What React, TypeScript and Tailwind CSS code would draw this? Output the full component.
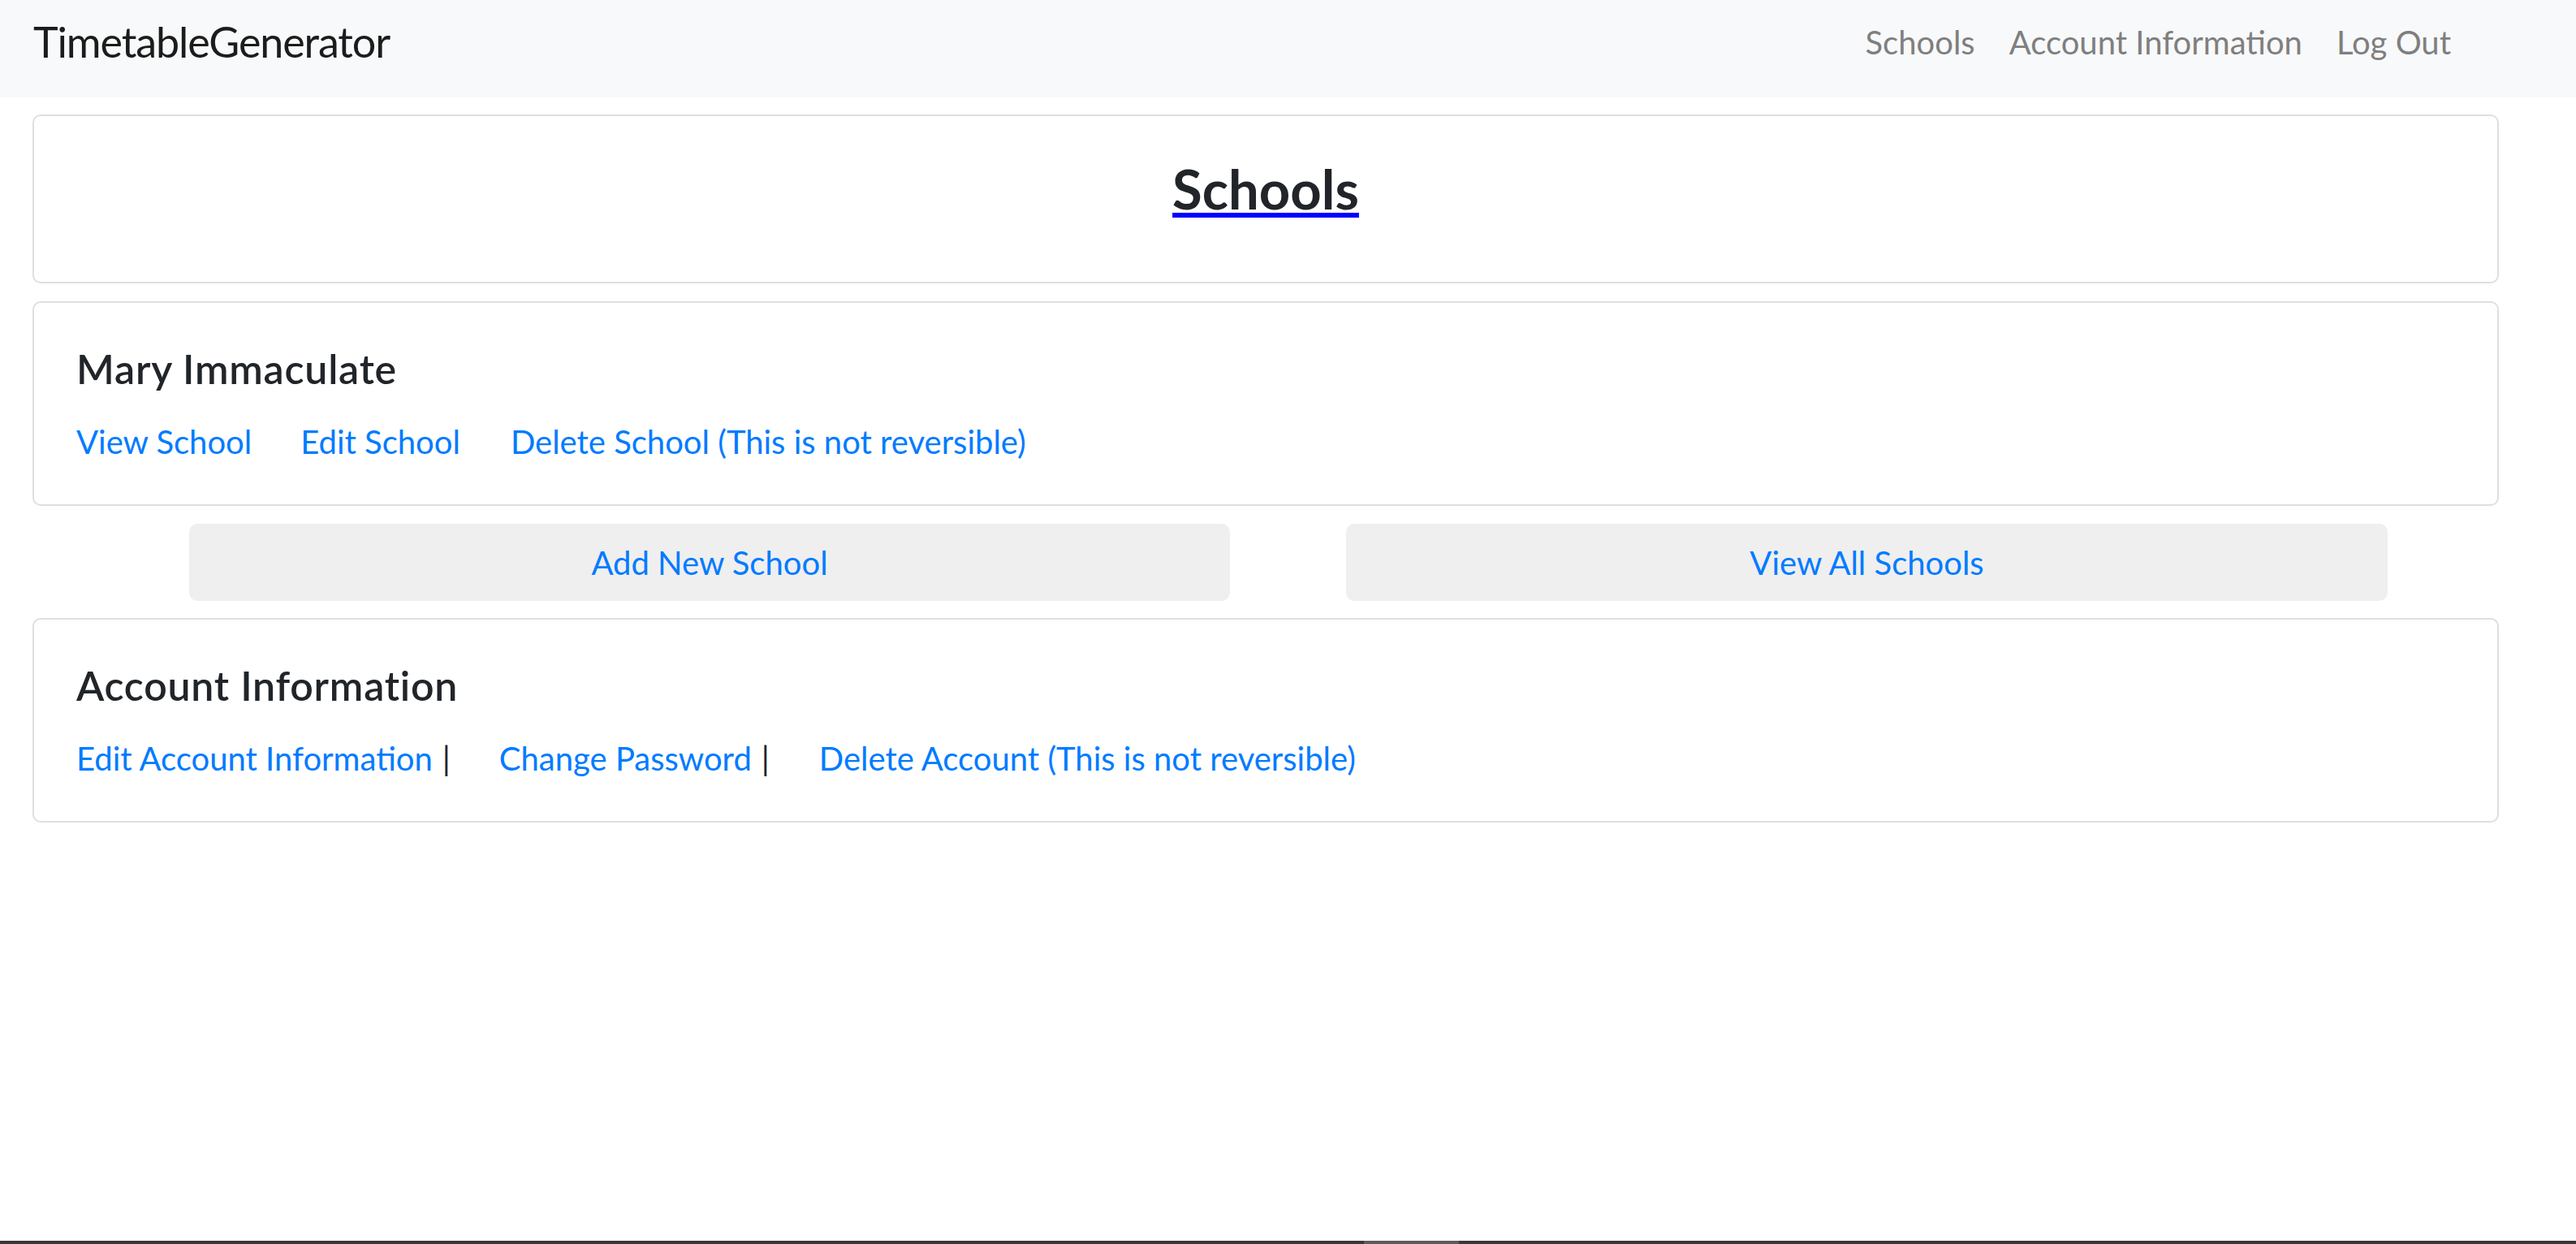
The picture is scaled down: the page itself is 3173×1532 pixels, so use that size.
import React from "react";

const linkCls = "text-[#007bff] hover:underline";

function Card({ title, children }: { title: string; children: React.ReactNode }) {
    return (
        <div className="ml-[40px] w-[3038px] h-[252px] border-2 border-[#dfdfdf] rounded-[10px] bg-white pl-[52px] pt-[56px]">
            <h5 className="text-[50px] leading-none font-semibold tracking-[0.8px] text-[#212529]">{title}</h5>
            <div className="mt-[45px] flex items-baseline text-[40px] leading-none">{children}</div>
        </div>
    );
}

export default function App() {
    return (
        <div className="h-[1532px] overflow-hidden bg-white flex flex-col font-['Lato',sans-serif]">
            {/* Navbar */}
            <nav className="h-[120px] shrink-0 bg-[#f8f9fa] flex items-start pl-[41px] pr-[154px]">
                <a href="#" className="mt-[25px] text-[52px] leading-none tracking-[-1.1px] text-[#1c1c1c]">
                    TimetableGenerator
                </a>
                <div className="ml-auto mt-[32px] flex gap-[42px] text-[40px] leading-none text-[#7f7f7f]">
                    <a href="#">Schools</a>
                    <a href="#">Account Information</a>
                    <a href="#">Log Out</a>
                </div>
            </nav>

            {/* Page header */}
            <div className="mt-[21px] ml-[40px] w-[3038px] h-[208px] border-2 border-[#dfdfdf] rounded-[10px] text-center pt-[56px]">
                <h3 className="text-[67px] leading-none font-bold text-[#212529] underline decoration-[#0000ff] decoration-[6px] underline-offset-[4px]">
                    Schools
                </h3>
            </div>

            <div className="mt-[22px]">
                <Card title="Mary Immaculate">
                    <a href="#" className={linkCls}>View School</a>
                    <a href="#" className={linkCls + " ml-[60px]"}>Edit School</a>
                    <a href="#" className={linkCls + " ml-[62px]"}>Delete School (This is not reversible)</a>
                </Card>
            </div>

            {/* Buttons */}
            <div className="mt-[22px] flex pl-[233px] gap-[143px]">
                <button className="w-[1282px] h-[95px] rounded-[10px] bg-[#efefef] text-[40px] text-[#007bff]">
                    Add New School
                </button>
                <button className="w-[1283px] h-[95px] rounded-[10px] bg-[#efefef] text-[40px] text-[#007bff]">
                    View All Schools
                </button>
            </div>

            <div className="mt-[21px]">
                <Card title="Account Information">
                    <a href="#" className={linkCls}>Edit Account Information</a>
                    <span className="ml-[12px] text-[#212529]">|</span>
                    <a href="#" className={linkCls + " ml-[60px]"}>Change Password</a>
                    <span className="ml-[12px] text-[#212529]">|</span>
                    <a href="#" className={linkCls + " ml-[61px]"}>Delete Account (This is not reversible)</a>
                </Card>
            </div>

            {/* bottom edge */}
            <div className="mt-auto h-[4px] flex bg-[#383838]">
                <div className="ml-[1680px] w-[117px] bg-[#5c5c5c]" />
            </div>
        </div>
    );
}
